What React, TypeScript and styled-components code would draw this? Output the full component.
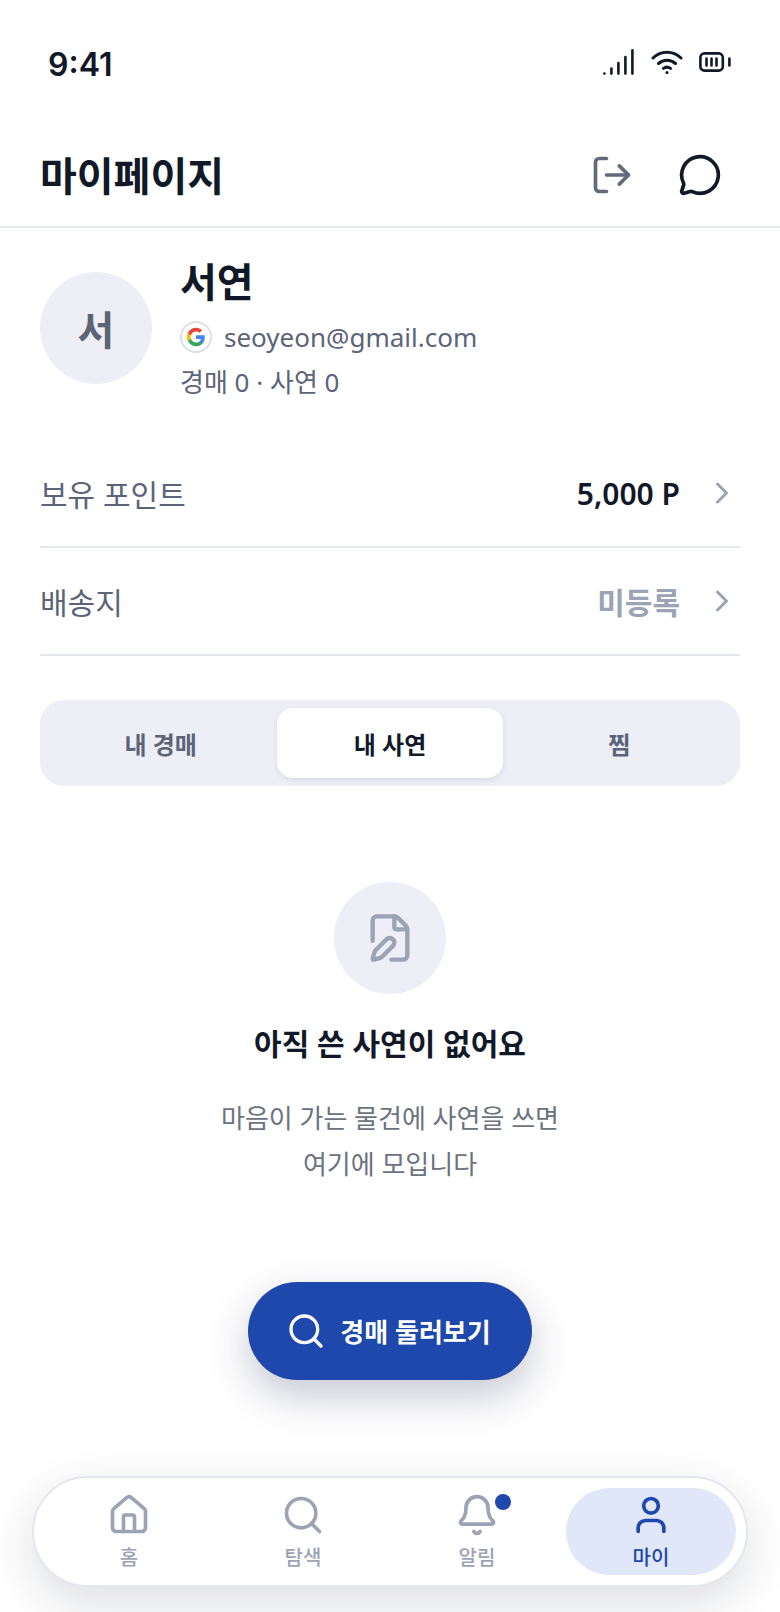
import React from "react";
import styled, { createGlobalStyle } from "styled-components";
import { ChevronRight, FilePen, House, LogOut, MessageCircle, Search, Bell, User } from "lucide-react";

const GlobalStyle = createGlobalStyle`
  html, body { margin: 0; padding: 0; background: #fff; }
  * { box-sizing: border-box; }
  body { font-family: "Noto Sans", "Noto Sans CJK KR", sans-serif; color: #111827; }
`;

const Page = styled.div`
  position: relative;
  width: 780px;
  height: 1612px;
  overflow: hidden;
  background: #fff;
  display: flex;
  flex-direction: column;
`;

const StatusBar = styled.div`
  height: 124px;
  padding: 0 49px 0 48px;
  display: flex;
  align-items: center;
  justify-content: space-between;
`;

const Clock = styled.span`
  font-family: Inter, "Liberation Sans", sans-serif;
  font-size: 32px;
  font-weight: 600;
  color: #111827;
  margin-top: 4px;
`;

const StatusIcons = styled.div`
  display: flex;
  align-items: center;
  gap: 16px;
  color: #111827;
`;

const Header = styled.header`
  height: 104px;
  padding: 0 36px 0 40px;
  border-bottom: 2px solid #e5e7ef;
  display: flex;
  align-items: center;
  justify-content: space-between;
`;

const Title = styled.h1`
  margin: 2px 0 0;
  font-size: 40px;
  line-height: 56px;
  font-weight: 700;
  color: #111827;
`;

const HeaderActions = styled.div`
  display: flex;
`;

const IconButton = styled.span<{ $color: string }>`
  width: 88px;
  height: 88px;
  display: flex;
  align-items: center;
  justify-content: center;
  color: ${(p) => p.$color};
`;

const Profile = styled.section`
  padding: 26px 40px 0;
  display: flex;
  align-items: flex-start;
  gap: 28px;
  height: 212px;
`;

const Avatar = styled.div`
  width: 112px;
  height: 112px;
  margin-top: 18px;
  border-radius: 50%;
  background: #edeef6;
  display: flex;
  align-items: center;
  justify-content: center;
  font-size: 40px;
  font-weight: 700;
  color: #5b6472;
`;

const Info = styled.div`
  display: flex;
  flex-direction: column;
`;

const Name = styled.div`
  font-size: 40px;
  line-height: 56px;
  font-weight: 700;
  color: #111827;
`;

const EmailRow = styled.div`
  margin-top: 9px;
  display: flex;
  align-items: center;
  gap: 12px;
  font-size: 26px;
  line-height: 36px;
  color: #5b6478;
`;

const GoogleBadge = styled.span`
  width: 32px;
  height: 32px;
  border: 2px solid #dcdee8;
  border-radius: 50%;
  background: #fff;
  display: flex;
  align-items: center;
  justify-content: center;
`;

const Stats = styled.div`
  margin-top: 9px;
  font-size: 26px;
  line-height: 36px;
  color: #5b6478;
`;

const Rows = styled.section`
  padding: 0 40px;
`;

const Row = styled.div`
  height: 108px;
  border-bottom: 2px solid #e5e7ef;
  display: flex;
  align-items: center;
  justify-content: space-between;
`;

const RowLabel = styled.span`
  font-size: 30px;
  color: #5b6478;
`;

const RowValue = styled.span<{ $muted?: boolean }>`
  display: flex;
  align-items: center;
  gap: 24px;
  font-size: 30px;
  font-weight: 600;
  color: ${(p) => (p.$muted ? "#9ca3b4" : "#111827")};
`;

const ChevronSlot = styled.span`
  display: flex;
  color: #9ca3b4;
`;

const Tabs = styled.div`
  margin: 44px 40px 0;
  height: 86px;
  padding: 8px;
  border-radius: 24px;
  background: #edeef6;
  display: grid;
  grid-template-columns: repeat(3, 1fr);
  gap: 4px;
`;

const Tab = styled.div<{ $active?: boolean }>`
  display: flex;
  align-items: center;
  justify-content: center;
  border-radius: 16px;
  font-size: 24px;
  font-weight: 600;
  color: ${(p) => (p.$active ? "#111827" : "#5b6478")};
  background: ${(p) => (p.$active ? "#fff" : "transparent")};
  box-shadow: ${(p) => (p.$active ? "0 2px 6px rgba(17,24,39,.08)" : "none")};
`;

const Empty = styled.section`
  margin-top: 96px;
  display: flex;
  flex-direction: column;
  align-items: center;
`;

const EmptyIcon = styled.div`
  width: 112px;
  height: 112px;
  border-radius: 50%;
  background: #edeef6;
  display: flex;
  align-items: center;
  justify-content: center;
  color: #9ca3b4;
`;

const EmptyTitle = styled.h2`
  margin: 28px 0 0;
  font-size: 30px;
  line-height: 44px;
  font-weight: 700;
  color: #111827;
`;

const EmptyBody = styled.p`
  margin: 29px 0 0;
  font-size: 26px;
  line-height: 46px;
  text-align: center;
  color: #6b7280;
`;

const Cta = styled.div`
  margin: 95px auto 0;
  width: 284px;
  height: 98px;
  padding-right: 3px;
  border-radius: 49px;
  background: #1e48ac;
  color: #fff;
  display: flex;
  align-items: center;
  justify-content: center;
  gap: 14px;
  font-size: 26px;
  font-weight: 600;
  box-shadow: 0 16px 40px rgba(30, 40, 80, 0.25);
`;

const Nav = styled.nav`
  position: absolute;
  left: 32px;
  bottom: 25px;
  width: 716px;
  height: 111px;
  padding: 10px;
  border: 2px solid #e5e7ef;
  border-radius: 56px;
  background: #fff;
  box-shadow: 0 16px 48px rgba(17, 24, 39, 0.14);
  display: grid;
  grid-template-columns: repeat(4, 1fr);
  gap: 4px;
`;

const NavItem = styled.div<{ $active?: boolean }>`
  position: relative;
  padding-top: 2px;
  border-radius: 44px;
  display: flex;
  flex-direction: column;
  align-items: center;
  justify-content: center;
  color: ${(p) => (p.$active ? "#1e48ac" : "#9ca3b4")};
  background: ${(p) => (p.$active ? "#e0e7f9" : "transparent")};
`;

const NavLabel = styled.span`
  font-size: 20px;
  line-height: 30px;
  margin-top: 6px;
  font-weight: 500;
`;

const Dot = styled.span`
  position: absolute;
  top: 6px;
  left: 103px;
  width: 16px;
  height: 16px;
  border-radius: 50%;
  background: #1e48ac;
`;

const SignalIcon = () => (
  <svg width="32" height="26" viewBox="0 0 32 26" fill="none" stroke="currentColor" strokeWidth="2.6" strokeLinecap="round">
    <path d="M1.4 24.6h.01M8.4 24.6v-5M15.4 24.6V14M22.4 24.6V8M29.4 24.6V1.4" />
  </svg>
);

const WifiIcon = () => (
  <svg width="32" height="24" viewBox="0 0 32 24" fill="none" stroke="currentColor" strokeWidth="3" strokeLinecap="round">
    <path d="M2 8C10 .4 22 .4 30 8M7.5 13.5c5-4.4 12-4.4 17 0M12.5 18.4c2.2-1.6 4.8-1.6 7 0" />
    <path d="M16 22.6h.01" />
  </svg>
);

const BatteryIcon = () => (
  <svg width="32" height="20" viewBox="0 0 32 20" fill="none" stroke="currentColor" strokeWidth="2.6" strokeLinecap="round">
    <rect x="1.4" y="1.4" width="22.4" height="17.2" rx="4" />
    <path d="M7.5 6.5v7M12.5 6.5v7M17.5 6.5v7M30.4 6.5v7" />
  </svg>
);

const GoogleIcon = () => (
  <svg width="20" height="20" viewBox="0 0 24 24">
    <path fill="#4285F4" d="M22.56 12.25c0-.78-.07-1.53-.2-2.25H12v4.26h5.92c-.26 1.37-1.04 2.53-2.21 3.31v2.77h3.57c2.08-1.92 3.28-4.74 3.28-8.09z" />
    <path fill="#34A853" d="M12 23c2.97 0 5.46-.98 7.28-2.66l-3.57-2.77c-.98.66-2.23 1.06-3.71 1.06-2.86 0-5.29-1.93-6.16-4.53H2.18v2.84C3.99 20.53 7.7 23 12 23z" />
    <path fill="#FBBC05" d="M5.84 14.09c-.22-.66-.35-1.36-.35-2.09s.13-1.43.35-2.09V7.07H2.18C1.43 8.55 1 10.22 1 12s.43 3.45 1.18 4.93l2.85-2.22.81-.62z" />
    <path fill="#EA4335" d="M12 5.38c1.62 0 3.06.56 4.21 1.64l3.15-3.15C17.45 2.09 14.97 1 12 1 7.7 1 3.99 3.47 2.18 7.07l3.66 2.84c.87-2.6 3.3-4.53 6.16-4.53z" />
  </svg>
);

export default function App() {
  return (
    <Page lang="ko">
      <GlobalStyle />
      <StatusBar>
        <Clock>9:41</Clock>
        <StatusIcons>
          <SignalIcon />
          <WifiIcon />
          <BatteryIcon />
        </StatusIcons>
      </StatusBar>
      <Header>
        <Title>마이페이지</Title>
        <HeaderActions>
          <IconButton $color="#636b7a"><LogOut size={44} strokeWidth={2} /></IconButton>
          <IconButton $color="#111827"><MessageCircle size={44} strokeWidth={2} /></IconButton>
        </HeaderActions>
      </Header>
      <Profile>
        <Avatar>서</Avatar>
        <Info>
          <Name>서연</Name>
          <EmailRow>
            <GoogleBadge><GoogleIcon /></GoogleBadge>
            seoyeon@gmail.com
          </EmailRow>
          <Stats>경매 0 · 사연 0</Stats>
        </Info>
      </Profile>
      <Rows>
        <Row>
          <RowLabel>보유 포인트</RowLabel>
          <RowValue>5,000 P<ChevronSlot><ChevronRight size={36} /></ChevronSlot></RowValue>
        </Row>
        <Row>
          <RowLabel>배송지</RowLabel>
          <RowValue $muted>미등록<ChevronSlot><ChevronRight size={36} /></ChevronSlot></RowValue>
        </Row>
      </Rows>
      <Tabs>
        <Tab>내 경매</Tab>
        <Tab $active>내 사연</Tab>
        <Tab>찜</Tab>
      </Tabs>
      <Empty>
        <EmptyIcon><FilePen size={52} strokeWidth={2} /></EmptyIcon>
        <EmptyTitle>아직 쓴 사연이 없어요</EmptyTitle>
        <EmptyBody>마음이 가는 물건에 사연을 쓰면<br />여기에 모입니다</EmptyBody>
      </Empty>
      <Cta><Search size={40} strokeWidth={2} />경매 둘러보기</Cta>
      <Nav>
        <NavItem><House size={44} strokeWidth={2} /><NavLabel>홈</NavLabel></NavItem>
        <NavItem><Search size={44} strokeWidth={2} /><NavLabel>탐색</NavLabel></NavItem>
        <NavItem><Bell size={44} strokeWidth={2} /><Dot /><NavLabel>알림</NavLabel></NavItem>
        <NavItem $active><User size={44} strokeWidth={2} /><NavLabel>마이</NavLabel></NavItem>
      </Nav>
    </Page>
  );
}
